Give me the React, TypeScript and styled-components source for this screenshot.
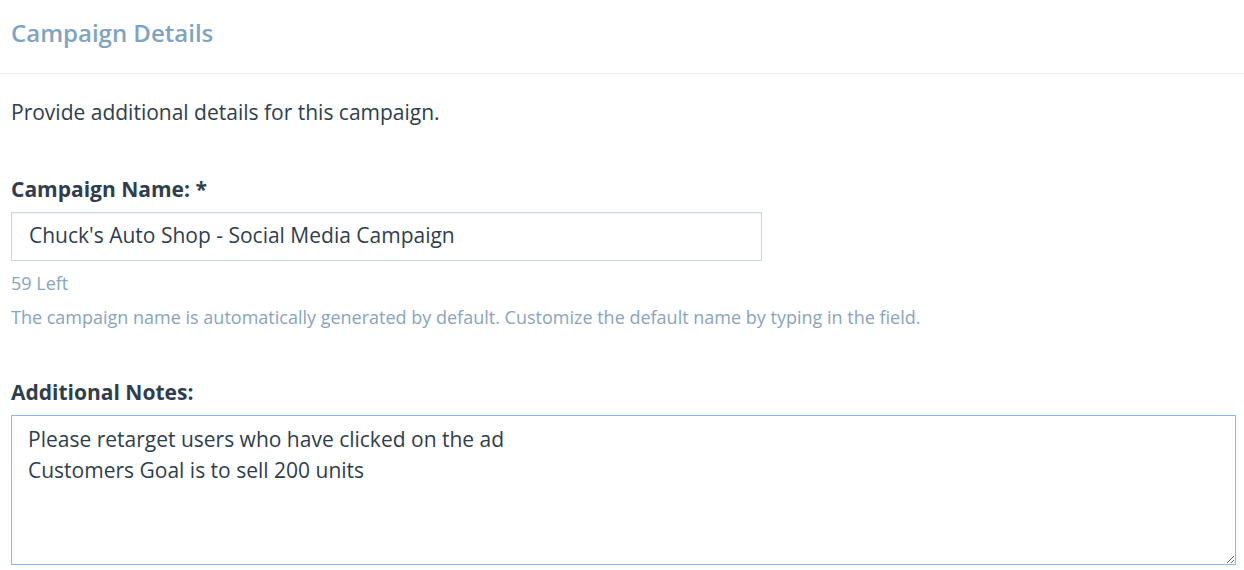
import React, { useEffect, useRef } from "react";
import styled, { createGlobalStyle } from "styled-components";

const GlobalStyle = createGlobalStyle`
  html, body {
    margin: 0;
    padding: 0;
    background: #ffffff;
    font-family: "Open Sans", "Noto Sans", sans-serif;
  }
`;

const Panel = styled.section`
  width: 1244px;
  background: #ffffff;
`;

const Header = styled.header`
  height: 74px;
  box-sizing: border-box;
  padding: 17px 11px 0;
  border-bottom: 1px solid #e8ecef;
`;

const Title = styled.h2`
  margin: 0;
  font-size: 24px;
  font-weight: 600;
  line-height: 32px;
  color: #7fa3c2;
`;

const Body = styled.div`
  padding: 23px 11px 0;
`;

const Intro = styled.p`
  margin: 0 0 48px;
  font-size: 21px;
  line-height: 30px;
  color: #2f3e4c;
`;

const Field = styled.div`
  display: flex;
  flex-direction: column;
  margin-bottom: 50px;

  &:last-child {
    margin-bottom: 0;
  }
`;

const Label = styled.label`
  font-size: 21px;
  font-weight: 700;
  line-height: 28px;
  color: #2f3e4c;
  margin-bottom: 9px;
`;

const TextInput = styled.input`
  width: 751px;
  height: 49px;
  box-sizing: border-box;
  padding: 0 17px 4px;
  border: 1px solid #c8d7e3;
  box-shadow: inset 0 1px 2px rgba(0, 0, 0, 0.06);
  font-family: inherit;
  font-size: 21px;
  color: #2f3e4c;
  outline: none;
`;

const Hint = styled.div<{ gap: number }>`
  margin-top: ${(p) => p.gap}px;
  font-size: 18px;
  line-height: 22px;
  color: #8aa4bd;
`;

const Notes = styled.textarea`
  width: 1225px;
  height: 150px;
  box-sizing: border-box;
  padding: 8px 16px;
  border: 1px solid #86bced;
  font-family: inherit;
  font-size: 21px;
  line-height: 31px;
  color: #2f3e4c;
  caret-color: #2f3e4c;
  outline: none;
  resize: vertical;
`;

const notesText =
  "Please retarget users who have clicked on the ad\nCustomers Goal is to sell 200 units";

export default function App() {
  const notesRef = useRef<HTMLTextAreaElement>(null);

  useEffect(() => {
    const el = notesRef.current;
    if (el) {
      el.focus();
      el.setSelectionRange(notesText.length, notesText.length);
    }
  }, []);

  return (
    <>
      <GlobalStyle />
      <Panel>
        <Header>
          <Title>Campaign Details</Title>
        </Header>
        <Body>
          <Intro>Provide additional details for this campaign.</Intro>
          <Field>
            <Label htmlFor="campaign-name">Campaign Name: *</Label>
            <TextInput
              id="campaign-name"
              defaultValue="Chuck's Auto Shop - Social Media Campaign"
            />
            <Hint gap={11}>59 Left</Hint>
            <Hint gap={12}>
              The campaign name is automatically generated by default. Customize
              the default name by typing in the field.
            </Hint>
          </Field>
          <Field>
            <Label htmlFor="notes">Additional Notes:</Label>
            <Notes id="notes" ref={notesRef} defaultValue={notesText} />
          </Field>
        </Body>
      </Panel>
    </>
  );
}
